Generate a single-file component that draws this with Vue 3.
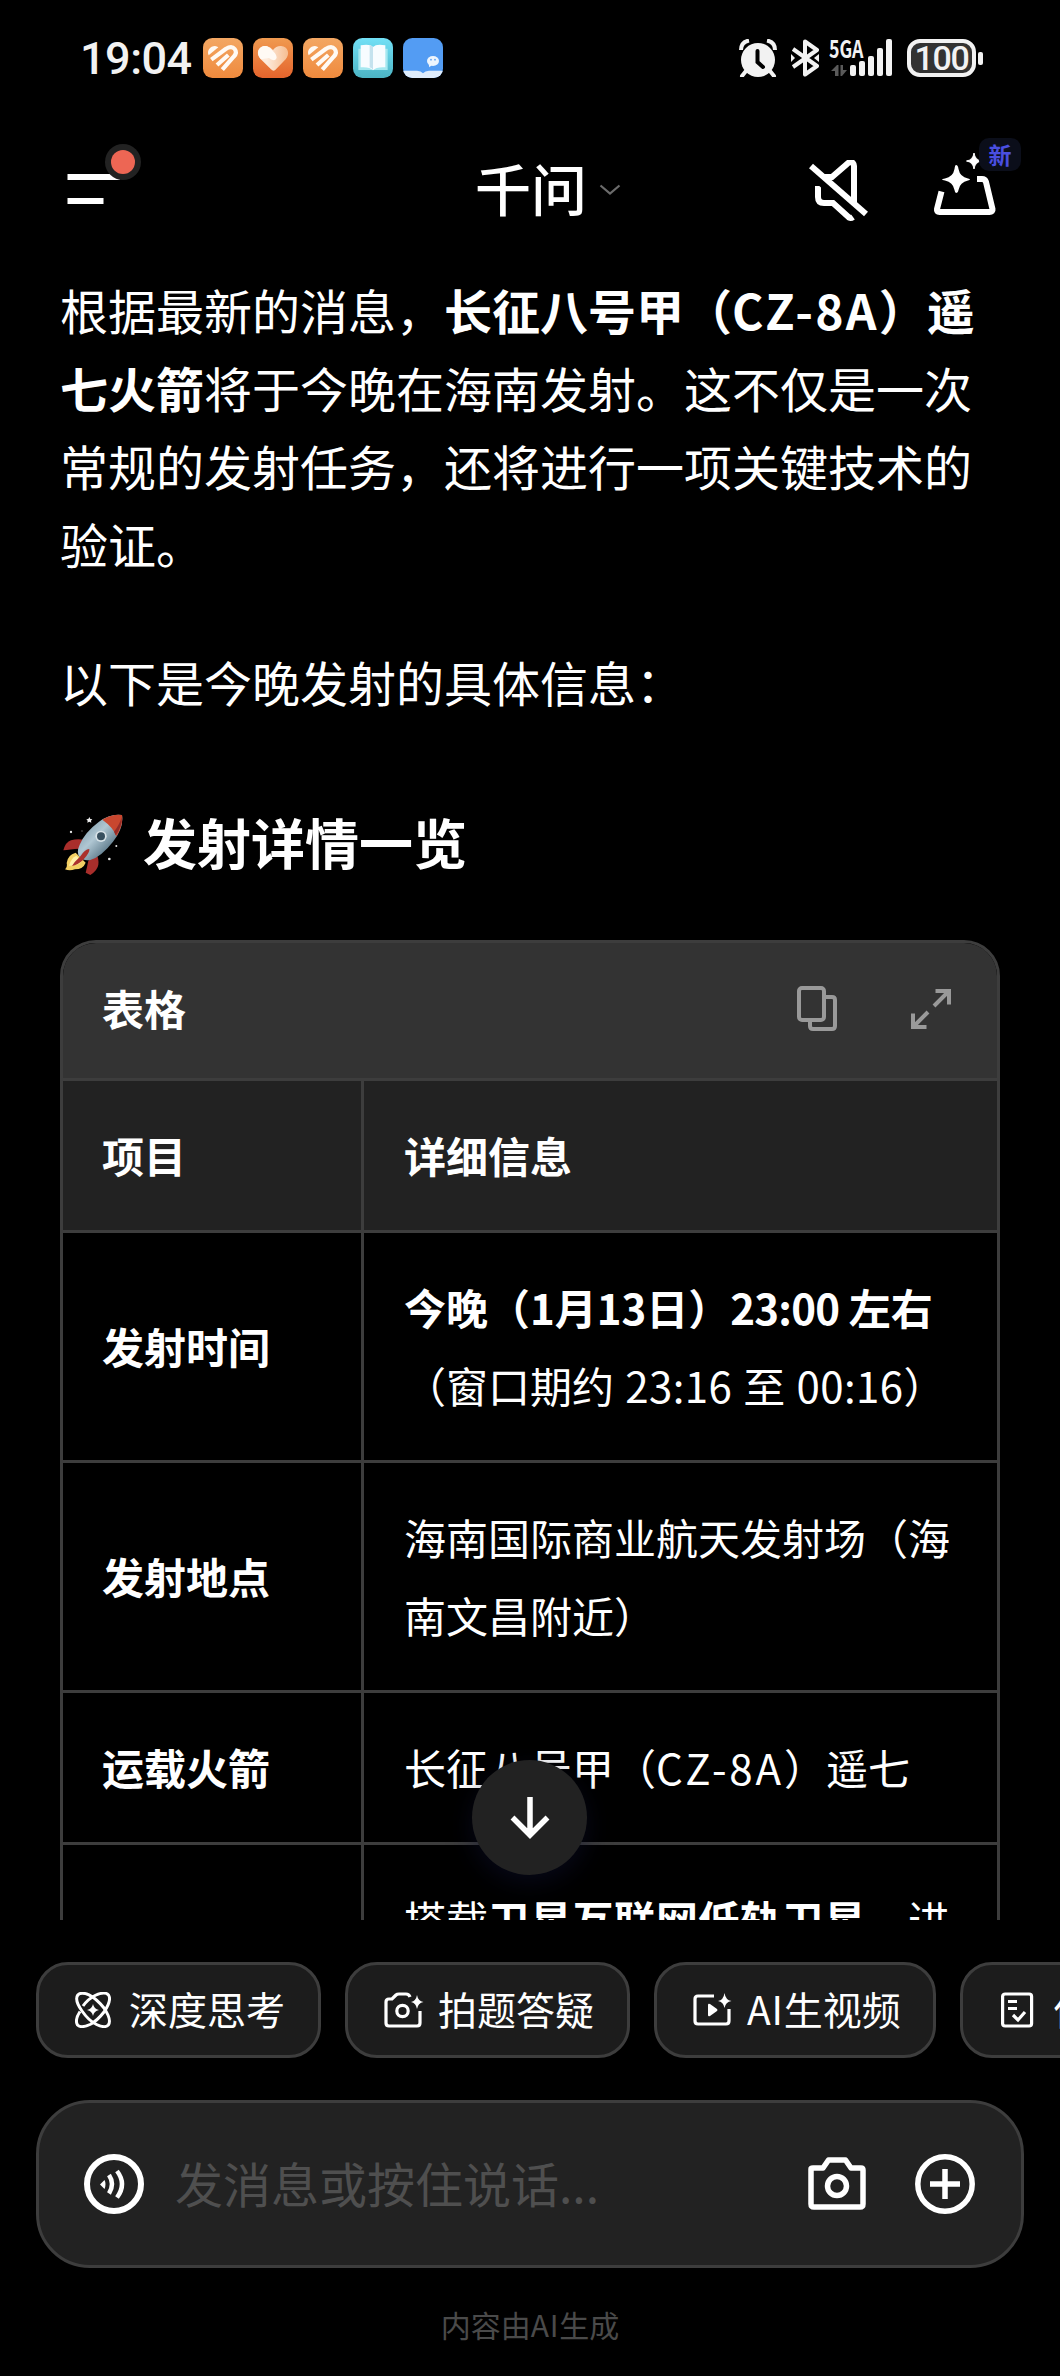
<script setup>
const rows = [
  {
    label: '发射时间',
    lines: [
      [{ t: '今晚（1月13日）', b: true }, { t: '23:00', b: true, c: 'tight' }, { t: ' 左右', b: true }],
      [{ t: '（窗口期约 ' }, { t: '23:16', c: 'loose' }, { t: ' 至 ' }, { t: '00:16', c: 'loose' }, { t: '）' }],
    ],
  },
  {
    label: '发射地点',
    lines: [[{ t: '海南国际商业航天发射场（海' }], [{ t: '南文昌附近）' }]],
  },
  { label: '运载火箭', lines: [[{ t: '长征八号甲（' }, { t: 'CZ-8A', c: 'wide' }, { t: '）遥七' }]] },
  {
    label: '',
    lines: [[{ t: '搭载' }, { t: '卫星互联网低轨卫星', b: true }, { t: '，进' }]],
  },
]
</script>

<template>
  <div class="screen">
    <div class="status">
      <span class="clock">19:04</span>
      <div class="apps">
        <svg v-for="n in 5" :key="n" width="40" height="40" viewBox="0 0 120 120">
          <defs>
            <linearGradient id="orange" x1="0" y1="0" x2="0" y2="1">
              <stop offset="0" stop-color="#f3a763" /><stop offset="1" stop-color="#ef8a3d" />
            </linearGradient>
            <linearGradient id="deep" x1="0" y1="0" x2="0" y2="1">
              <stop offset="0" stop-color="#f09a50" /><stop offset="1" stop-color="#e4642c" />
            </linearGradient>
            <linearGradient id="cyan" x1="0" y1="0" x2="0" y2="1">
              <stop offset="0" stop-color="#72e0f6" /><stop offset="1" stop-color="#4cb4c4" />
            </linearGradient>
            <linearGradient id="heart" x1="0" y1="0" x2="1" y2="0">
              <stop offset="0.3" stop-color="#fdebdc" /><stop offset="1" stop-color="#f6bd90" />
            </linearGradient>
            <clipPath id="tile"><rect width="120" height="120" rx="28" /></clipPath>
          </defs>
          <g clip-path="url(#tile)">
            <template v-if="n === 1 || n === 3">
              <rect width="120" height="120" fill="url(#orange)" />
              <path d="M17 52 C10 38 22 24 36 24 Q42 25 46 28Z" fill="#fffaf4" />
              <path d="M25 65 L68 33 Q86 22 95 33 Q104 44 92 56 L58 95 M42 81 L76 51" fill="none" stroke="#fffaf4" stroke-width="12.500" stroke-linejoin="round" />
            </template>
            <template v-else-if="n === 2">
              <rect width="120" height="120" fill="url(#deep)" />
              <path d="M54 94 L22 62 C4 42 22 20 42 25 Q52 27 60 36 Q70 23 84 24 C106 26 112 48 98 64 L66 97 Q60 101 54 94Z" fill="url(#heart)" />
              <path d="M24 64 C4 42 22 20 42 25 Q50 27 66 46 Q76 60 66 66 Q56 68 48 60 Z" fill="#fffaf4" />
            </template>
            <template v-else-if="n === 4">
              <rect width="120" height="120" fill="url(#cyan)" />
              <path d="M16 32 H104 V96 H16Z" fill="#a5e8f0" />
              <path d="M23 22 Q50 16 60 27 Q70 16 97 22 V88 Q70 86 60 97 Q50 86 23 88Z" fill="#f7fcff" />
              <path d="M50 21 Q57 22 60 27 V97 Q57 90 50 88Z" fill="#c4e2ee" />
            </template>
            <template v-else>
              <rect width="120" height="120" fill="#539cf3" />
              <path d="M0 98 H42 Q54 98 60 106 Q66 98 78 98 H120 V120 H0Z" fill="#dfecfb" />
              <path d="M77 78 L79 88 L88 80Z" fill="#eef5fd" />
              <ellipse cx="90" cy="69" rx="18" ry="15" fill="#eef5fd" />
              <circle cx="84" cy="65" r="2.5" fill="#539cf3" /><circle cx="96" cy="65" r="2.5" fill="#539cf3" />
            </template>
          </g>
        </svg>
      </div>

      <div class="signals">
        <svg class="alarm" width="38" height="38" viewBox="0 0 38 38">
          <circle cx="19" cy="21" r="17" fill="#f2f2f2" />
          <path d="M2 11 Q2 3 10 1.5 M36 11 Q36 3 28 1.5" stroke="#f2f2f2" stroke-width="4" fill="none" />
          <path d="M7 32 L3 37 M31 32 L35 37" stroke="#f2f2f2" stroke-width="4" stroke-linecap="round" />
          <path d="M18.500 12 V23 L24 28" stroke="#000" stroke-width="4" fill="none" stroke-linecap="round" />
        </svg>
        <svg class="bt" width="28" height="38" viewBox="0 0 28 38">
          <path d="M2 10 L26 27 L14 35.500 V2.500 L26 11 L2 28" stroke="#f2f2f2" stroke-width="4" fill="none" stroke-linejoin="round" />
          <path d="M0 15 L4 19 L0 23Z M28 15 L23 19 L28 23Z" fill="#f2f2f2" />
        </svg>
        <div class="cell">
          <span class="net">5GA</span>
          <svg width="64" height="39" viewBox="0 0 64 39">
            <g fill="#f2f2f2">
              <rect x="20" y="26" width="6" height="11" rx="2" /><rect x="29" y="22" width="6" height="15" rx="2" />
              <rect x="38" y="17" width="6" height="20" rx="2" /><rect x="47" y="9" width="6" height="28" rx="2" />
              <rect x="56" y="0" width="6" height="37" rx="2" />
            </g>
            <path d="M1 32 L7 26 H8.500 V37 H5 V32Z M10.500 26 H13 V31 H17 L12 37 H10.500Z" fill="#5a5a5a" />
          </svg>
        </div>
        <div class="battery">100</div>
        <i class="nub"></i>
      </div>
    </div>

    <header class="bar">
      <svg width="90" height="70" viewBox="0 0 90 70">
        <path d="M7.500 33 H60 M7.500 57 H43.500" stroke="#fff" stroke-width="6" />
        <circle cx="63" cy="18" r="18" fill="#222" /><circle cx="63" cy="18" r="12" fill="#ed6654" />
      </svg>
      <div class="brand">
        <span>千问</span>
        <svg width="22" height="12" viewBox="0 0 22 12">
          <path d="M1.500 1.500 L11 9.500 L20.500 1.500" stroke="#6b6b6b" stroke-width="2.200" fill="none" />
        </svg>
      </div>
      <div class="tools">
        <svg width="62" height="62" viewBox="0 0 62 62">
          <path d="M16 17 H24 L39 4 Q42 1 45 3 Q46 4 46 6 V45" stroke="#fff" stroke-width="6" fill="none" />
          <path d="M10 26 V37 Q10 43 16 43 H25 L41 57.500 Q43 58.500 45 57" stroke="#fff" stroke-width="6" fill="none" />
          <path d="M3 6 L58 54" stroke="#fff" stroke-width="6" />
          <path d="M7 19 L50 57" stroke="#000" stroke-width="5" />
        </svg>
        <div class="tray">
          <svg width="66" height="64" viewBox="0 0 66 64">
            <path d="M10.500 39.500 L6 57 Q5.500 60 8.500 60 H58.500 Q62 60 61.500 57 L55 30 Q54 27 51 27 H46" stroke="#fff" stroke-width="6" fill="none" />
            <path d="M25 13 Q27 13 27.500 17 Q29 25 37 26.500 Q39 27 39 27.500 Q39 28 37 28.500 Q29 30 27.500 38 Q27 41 25 41 Q24 41 23.500 38 Q22 30 14 28.500 Q11 28 11 27.500 Q11 27 14 26.500 Q22 25 23.500 17 Q24 13 25 13Z" fill="#fff" />
            <path d="M43 1 Q44 8 50.500 9 Q44 10 43 17 Q42 10 35.500 9 Q42 8 43 1Z" fill="#fff" stroke="#fff" stroke-width="1" />
          </svg>
          <span class="new">新</span>
        </div>
      </div>
    </header>

    <main class="chat">
      <p class="para">
        根据最新的消息，<b>长征八号甲（<span class="ls">CZ-8A</span>）遥</b><br /><b>七火箭</b>将于今晚在海南发射。这不仅是一次<br />常规的发射任务，还将进行一项关键技术的<br />验证。
      </p>
      <p class="para">以下是今晚发射的具体信息：</p>
      <h3>
        <svg width="60" height="62" viewBox="0 0 180 186">
          <defs>
            <linearGradient id="hull" x1="0.250" y1="0.250" x2="0.800" y2="0.800">
              <stop offset="0" stop-color="#8eaab8" /><stop offset="0.350" stop-color="#b0c7d3" /><stop offset="1" stop-color="#4d6b7c" />
            </linearGradient>
          </defs>
          <path d="M6 166 Q14 158 11 147 Q14 122 38 116 L68 146 Q60 166 36 166 Q20 172 6 166Z" fill="#f2cf63" />
          <path d="M18 155 Q24 132 40 125 L56 142 Q46 156 18 155Z" fill="#fff0a8" />
          <path d="M1 109 Q8 84 24 79 Q42 73 62 77 L50 104 Q20 106 1 109Z" fill="#a92e2b" />
          <path d="M82 183 Q104 168 106 152 Q108 134 101 122 L76 140 Q72 160 68 176Z" fill="#a92e2b" />
          <path d="M177 3 Q183 42 150 83 Q116 127 82 138 Q62 142 50 129 Q39 116 50 92 Q66 54 108 23 Q142 -2 177 3Z" fill="url(#hull)" />
          <path d="M177 3 Q182 34 160 67 Q153 42 118 17 Q148 -1 177 3Z" fill="#c9472f" />
          <path d="M176 10 Q178 36 158 64 L153 53 Q170 32 176 10Z" fill="#952c28" />
          <path d="M51 128 Q67 104 79 105 Q81 116 61 137 Q44 153 27 156 Q34 143 51 128Z" fill="#ab312d" />
          <circle cx="114" cy="67" r="17" fill="#d8e3e8" /><circle cx="114" cy="67" r="12" fill="#38505f" />
          <path d="M79 9 l3 6 6 1 -4 4 1 6 -6 -3 -6 3 1 -6 -4 -4 6 -1Z" fill="#eee" />
          <g fill="#e6e6e6"><circle cx="24" cy="54" r="3.500" /><circle cx="57" cy="51" r="2" fill="#777" /><circle cx="160" cy="96" r="3" /><circle cx="139" cy="135" r="4" /></g>
        </svg>
        <span>发射详情一览</span>
      </h3>

      <section class="card">
        <div class="card-head">
          <span>表格</span>
          <svg class="copy" width="42" height="48" viewBox="0 0 42 48" fill="none" stroke="#999" stroke-width="4">
            <rect x="3" y="3" width="25" height="32" rx="3" />
            <path d="M28 12 H36 Q39 12 39 15 V41 Q39 44 36 44 H17 Q14 44 14 41 V35" />
          </svg>
          <svg class="expand" width="42" height="42" viewBox="0 0 42 42" fill="none" stroke="#999" stroke-width="4">
            <path d="M25.500 3 H39 V16.500 M38 4 L24 18 M3 25.500 V39 H16.500 M4 38 L18 24" />
          </svg>
        </div>
        <div class="row th">
          <div class="key">项目</div>
          <div class="val">详细信息</div>
        </div>
        <div v-for="(r, i) in rows" :key="i" class="row">
          <div class="key">{{ r.label }}</div>
          <div class="val">
            <div v-for="(l, j) in r.lines" :key="j"><span v-for="(s, k) in l" :key="k" :class="[{ bold: s.b }, s.c]">{{ s.t }}</span></div>
          </div>
        </div>
      </section>

      <button class="down">
        <svg width="40" height="42" viewBox="0 0 40 42" fill="none" stroke="#fff" stroke-width="5.500">
          <path d="M20 0 V38 M2.500 20.500 L20 38 L37.500 20.500" />
        </svg>
      </button>
    </main>

    <nav class="chips">
      <div class="chip">
        <svg width="36" height="36" viewBox="0 0 36 36" fill="none" stroke="#fff" stroke-width="3">
          <path d="M8 14 Q13 7 20 3.500 Q30 -1 33.500 3 Q37 8 29 20 Q22 29 15 32.500 Q6 36.500 2.500 33 Q-0.500 28 5 19.500" />
          <path d="M14 2.800 Q6 -0.500 2.800 3 Q-0.800 8 7 19 Q14 29 21.500 32.500 Q30 36.500 33.300 33 Q37 28 29 16 Q22 7 14 2.800Z" />
          <path d="M18 12 Q19 17 24 18 Q19 19 18 24 Q17 19 12 18 Q17 17 18 12Z" fill="#fff" stroke="none" />
        </svg>
        <span>深度思考</span>
      </div>
      <div class="chip">
        <svg width="40" height="36" viewBox="0 0 40 36" fill="none" stroke="#fff" stroke-width="3.200">
          <path d="M36 19 V31 Q36 34 33 34 H5 Q2 34 2 31 V10 Q2 7 5 7 H8 L12 3 Q13 2 15 2 H22 Q25 2 26 5" />
          <circle cx="18.500" cy="19" r="5.700" />
          <path d="M33 3 Q34 9 39.500 10 Q34 11 33 17 Q32 11 27 10 Q32 9 33 3Z" fill="#fff" stroke="none" />
        </svg>
        <span>拍题答疑</span>
      </div>
      <div class="chip third">
        <svg width="40" height="36" viewBox="0 0 40 36" fill="none" stroke="#fff" stroke-width="3.200">
          <path d="M21 4 H5 Q2 4 2 7 V29 Q2 32 5 32 H33 Q36 32 36 29 V17" />
          <path d="M15 13 Q15 11 17 12 L24 17 Q25 18 24 19 L17 24 Q15 25 15 23Z" fill="#fff" stroke="none" />
          <path d="M31.500 1 Q32.500 8 38.500 9 Q32.500 10 31.500 16 Q30.500 10 25 9 Q30.500 8 31.500 1Z" fill="#fff" stroke="none" />
        </svg>
        <span><span class="ai">AI</span>生视频</span>
      </div>
      <div class="chip">
        <svg width="36" height="36" viewBox="0 0 36 36" fill="none" stroke="#fff" stroke-width="3.200">
          <rect x="3.600" y="2" width="29" height="32" rx="2.500" />
          <path d="M9 9.500 H18 M9 16.500 H18 M14 23 L19 28 L26 20" />
        </svg>
        <span>作业批改</span>
      </div>
    </nav>

    <div class="input">
      <svg width="60" height="60" viewBox="0 0 60 60" fill="none" stroke="#fff">
        <circle cx="30" cy="30" r="27" stroke-width="6" />
        <path d="M16 30.500 L20.500 26 Q22.500 30 20.500 35Z" fill="#fff" stroke="none" />
        <path d="M25 21 Q31 30 25 39.500 M33 17 Q43 30 33 43.500" stroke-width="4.500" />
      </svg>
      <span class="ph">发消息或按住说话...</span>
      <svg class="cam" width="58" height="54" viewBox="0 0 58 54" fill="none" stroke="#fff">
        <path d="M3 12 Q3 11 5 11 H15 L20.500 3 H37.500 L43 11 H53 Q55 11 55 13 V47 Q55 50 52 50 H6 Q3 50 3 47Z" stroke-width="5.500" stroke-linejoin="round" />
        <circle cx="29" cy="29" r="9.500" stroke-width="5.500" />
      </svg>
      <svg width="60" height="60" viewBox="0 0 60 60" fill="none" stroke="#fff">
        <circle cx="30" cy="30" r="27.200" stroke-width="5.500" />
        <path d="M30 15 V45 M15 30 H45" stroke-width="5.500" />
      </svg>
    </div>
    <footer>内容由<span class="ai">AI</span>生成</footer>
  </div>
</template>

<style>
body { background: #000; }
</style>

<style scoped>
.screen {
  width: 1060px;
  height: 2376px;
  background: #000;
  color: #fff;
  font-family: "Noto Sans CJK SC", sans-serif;
  overflow: hidden;
  display: flex;
  flex-direction: column;
}
svg { display: block; flex: none; }
span { white-space: nowrap; }

.status { height: 116px; flex: none; display: flex; align-items: center; padding: 0 77px 0 80px; }
.clock { width: 123px; font-family: Roboto, sans-serif; font-size: 45px; line-height: 60px; font-weight: 500; color: #f2f2f2; letter-spacing: -0.5px; margin-top: 1px; }
.apps { display: flex; gap: 10px; }
.signals { margin-left: auto; display: flex; align-items: center; }
.bt { margin-left: 14px; }
.cell { margin-left: 11px; width: 64px; height: 39px; position: relative; }
.net { position: absolute; left: -1px; top: -3px; font: 700 24px/24px "Noto Sans CJK SC", sans-serif; color: #f2f2f2; transform: scaleX(0.74); transform-origin: 0 0; }
.battery { box-sizing: border-box; margin-left: 13px; width: 69px; height: 38px; border: 4px solid #f2f2f2; border-radius: 13px; background: #333; color: #f2f2f2; font-family: Roboto, sans-serif; font-size: 34px; line-height: 31px; text-align: center; font-weight: 500; letter-spacing: -1.3px; }
.nub { width: 5px; height: 13px; margin-left: 2px; border-radius: 2px; background: #f2f2f2; }

.bar { height: 134px; flex: none; display: flex; align-items: flex-start; padding: 28px 0 0 60px; box-sizing: border-box; }
.brand { display: flex; align-items: center; margin: 3px 0 0 325px; font-size: 56px; line-height: 80px; font-weight: 500; gap: 12px; }
.brand svg { margin-top: 5px; }
.tools { display: flex; margin: 16px 36px 0 auto; }
.tray { position: relative; margin-left: 61px; width: 93px; margin-top: -8px; }
.new { position: absolute; left: 48px; top: -14px; width: 42px; height: 33px; border-radius: 10px; background: #0b0e1a; color: #4a4fe0; font-size: 23px; line-height: 32px; text-align: center; font-weight: 700; }

.chat { position: relative; height: 1670px; flex: none; overflow: hidden; padding: 20px 60px 0; box-sizing: border-box; }
.para { margin: 0 0 60px; font-size: 48px; line-height: 78px; white-space: nowrap; }
.ls { letter-spacing: 2.2px; }
h3 { margin: 82px 0 58px; display: flex; align-items: center; gap: 20px; padding-left: 3px; font-size: 54px; line-height: 80px; font-weight: 700; }
h3 svg { margin-top: 5px; }

.card { border: 3px solid #3d3d3d; border-radius: 36px; overflow: hidden; font-size: 42px; line-height: 78px; }
.card-head { height: 135px; background: #333; display: flex; align-items: center; padding: 0 45px 0 39px; font-weight: 700; }
.card-head span { margin-top: -6px; }
.card-head .copy { margin: -3px 72px 0 auto; }
.card-head .expand { margin-top: -3px; }
.row { display: flex; border-top: 3px solid #3d3d3d; }
.th { background: #222; }
.th .val { font-weight: 700; }
.key { width: 301px; box-sizing: border-box; border-right: 3px solid #3d3d3d; padding: 0 0 2px 39px; display: flex; align-items: center; font-weight: 700; flex: none; }
.val { padding: 34.5px 0 36.5px 40px; white-space: nowrap; }
.val span { white-space: pre; word-spacing: 1.8px; }
.bold { font-weight: 700; }
.val .bold { word-spacing: 0; }
.wide { letter-spacing: 2.9px; }
.loose { letter-spacing: 0.4px; }
.tight { letter-spacing: -0.8px; }

.down { position: absolute; left: 472px; top: 1510px; width: 115px; height: 115px; border: 0; border-radius: 50%; padding: 0; background: #222; display: flex; align-items: center; justify-content: center; box-shadow: 0 8px 24px rgba(14, 16, 48, 0.5); }

.chips { margin: 42px 0 0 36px; display: flex; gap: 24px; flex: none; }
.chip { box-sizing: border-box; flex: none; width: 285px; height: 96px; border: 3px solid #3d3d3d; border-radius: 32px; background: #1c1c1c; display: flex; align-items: center; padding-left: 36px; font-size: 39px; line-height: 60px; }
.chip > span { margin: -4px 0 0 18px; }
.chip svg[width="40"] + span { margin-left: 14px; }
.third { width: 282px; }
.ai { letter-spacing: 0.8px; }

.input { box-sizing: border-box; flex: none; width: 988px; height: 168px; margin: 42px 0 0 36px; border: 3px solid #3d3d3d; border-radius: 54px; background: #222; display: flex; align-items: center; padding: 0 46px 0 45px; }
.ph { margin: -4px 0 0 31px; font-size: 48px; line-height: 70px; color: #4f4f4f; }
.cam { margin: 0 49px 0 auto; }
footer { margin-top: 34px; text-align: center; font-size: 30px; line-height: 44px; color: #4a4a4a; }
</style>
